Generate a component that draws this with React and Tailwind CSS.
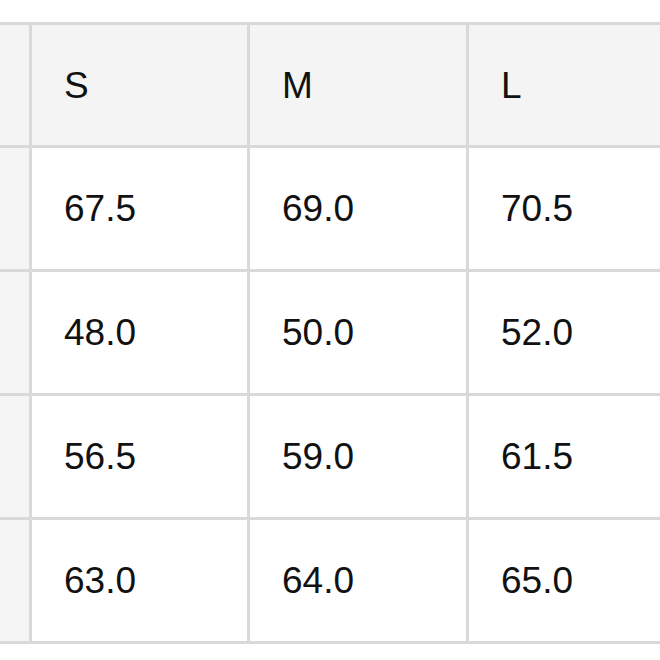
export default function App() {
  const header = ["S", "M", "L"];
  const rows = [
    ["67.5", "69.0", "70.5"],
    ["48.0", "50.0", "52.0"],
    ["56.5", "59.0", "61.5"],
    ["63.0", "64.0", "65.0"],
  ];
  return (
    <div className="w-[660px] h-[660px] bg-white overflow-hidden pt-[22px]" style={{ fontFamily: '"Liberation Sans", Arial, sans-serif' }}>
      <div className="w-[685px] grid grid-cols-[29px_215px_216px_216px] grid-rows-[120px_121px_121px_121px_121px] gap-[3px] py-[3px] bg-[#d9d9d9] text-[37px] leading-none text-[#111]">
        <div className="bg-[#f4f4f4]" />
        {header.map((h) => (
          <div key={h} className="bg-[#f4f4f4] flex items-center pl-[32px]">{h}</div>
        ))}
        {rows.map((r, i) => (
          <>
            <div key={"l" + i} className="bg-[#f5f5f5]" />
            {r.map((v, j) => (
              <div key={i + "-" + j} className="bg-white flex items-center pl-[32px]">{v}</div>
            ))}
          </>
        ))}
      </div>
    </div>
  );
}
